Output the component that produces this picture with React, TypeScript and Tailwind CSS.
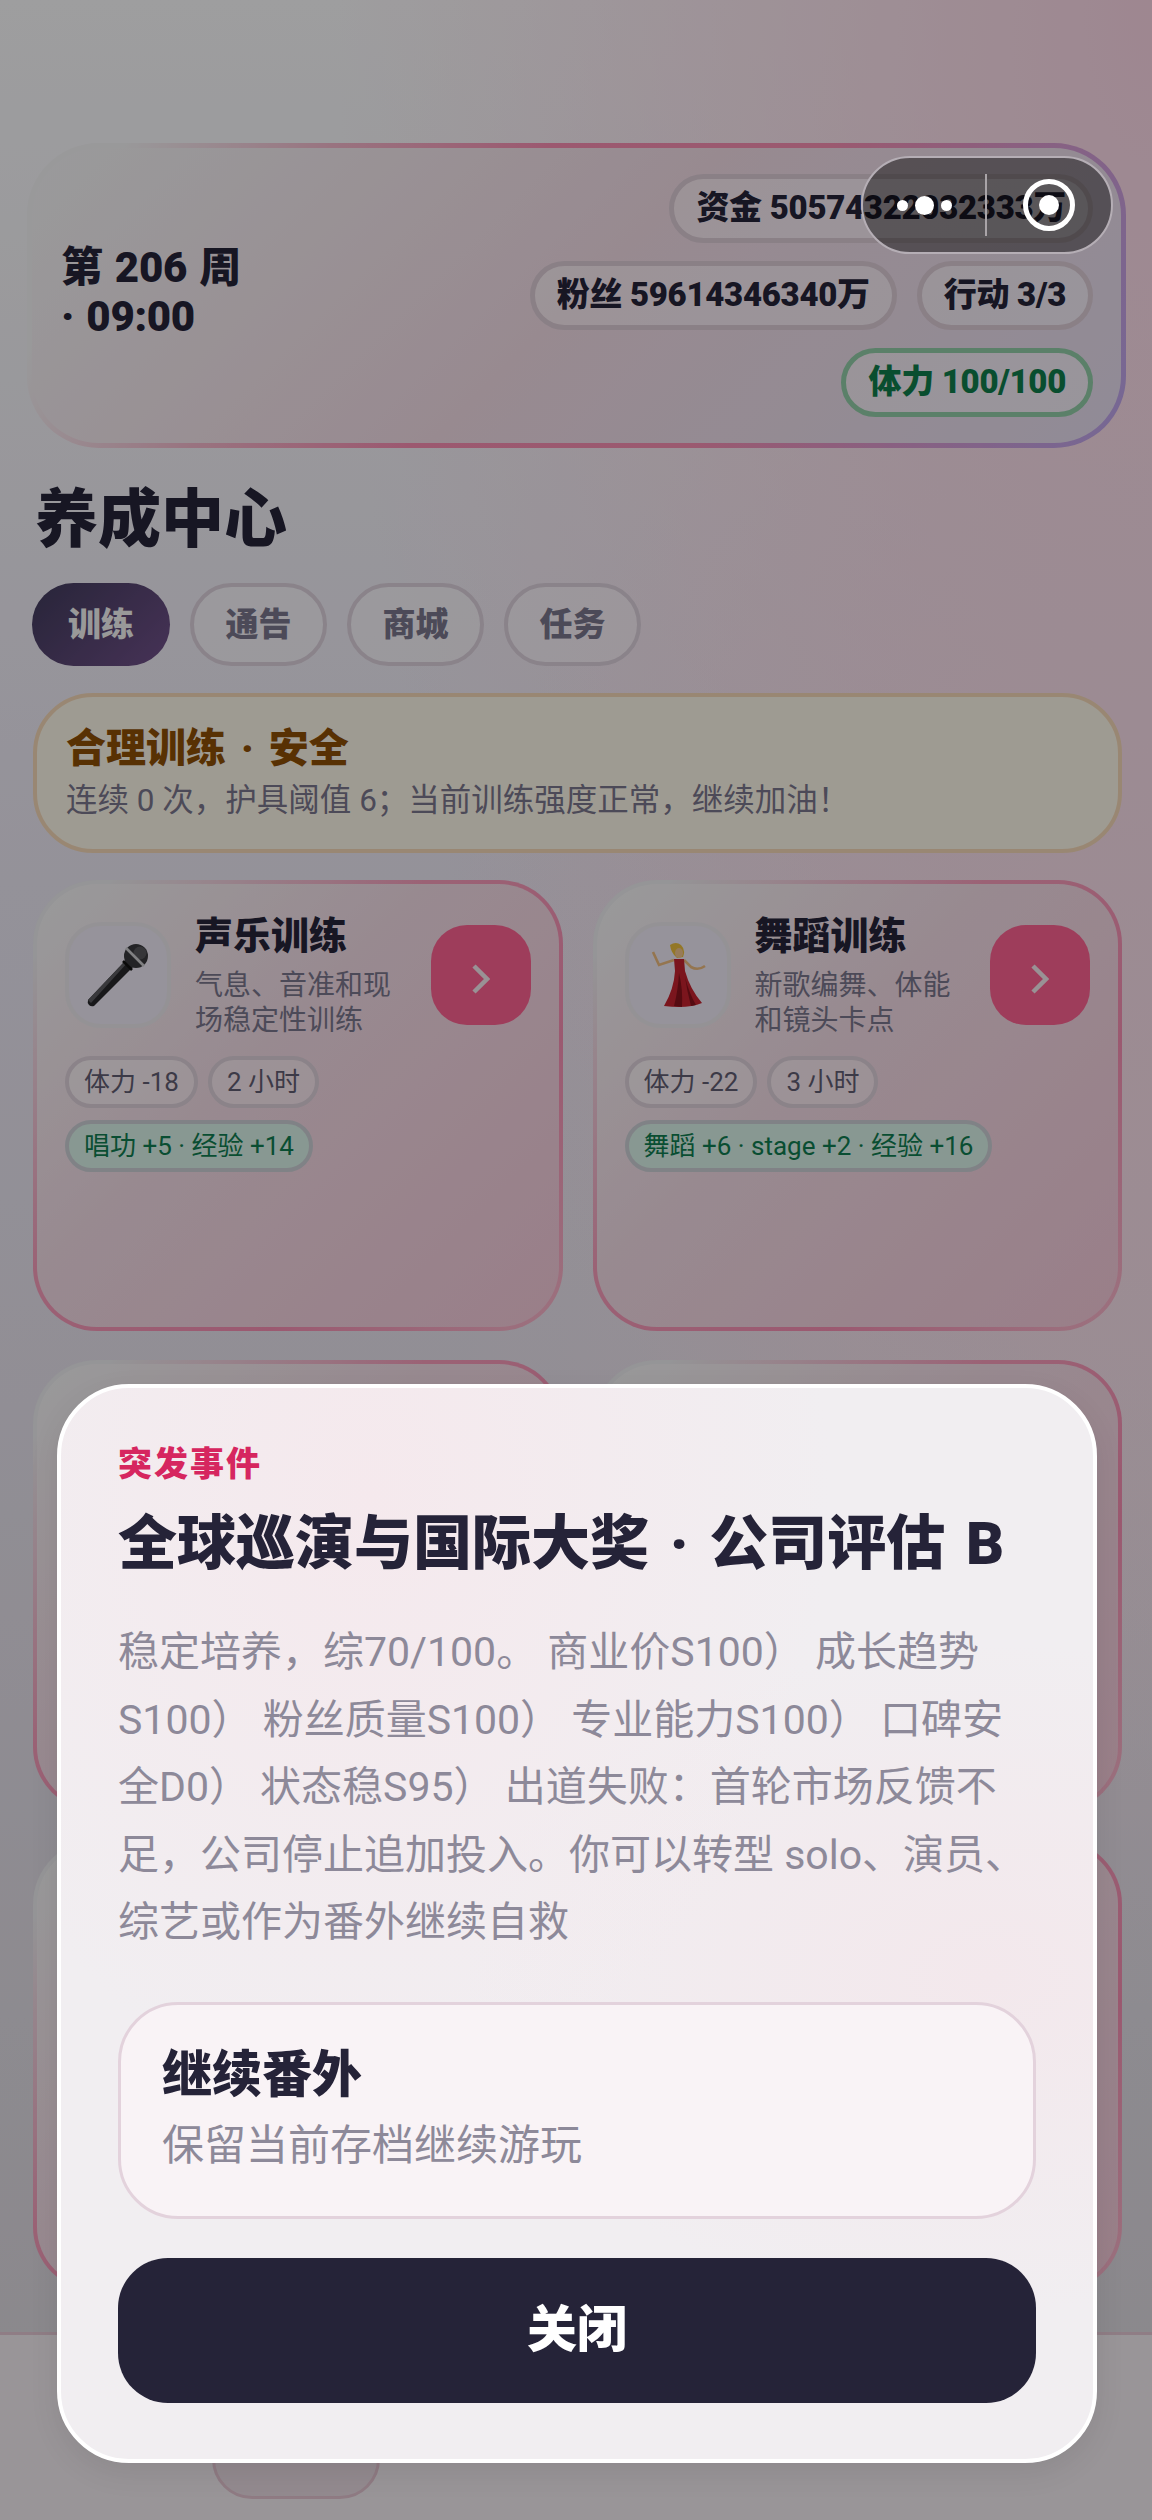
const FONT = "font-['Roboto','Noto_Sans_CJK_SC',sans-serif]";

function Mic() {
  return (
    <svg width="64" height="64" viewBox="0 0 64 64" className="block">
      <path d="M2 57 L40 17 L47 24 L8 63 Q5 64 3 62 Q1 60 2 57Z" fill="#26262a" />
      <path d="M2 57 L40 17 L42 19 L5 60Z" fill="#5a5a5f" />
      <circle cx="50" cy="13" r="12" fill="#38383c" />
      <circle cx="54" cy="10" r="6.5" fill="#55555a" />
      <path d="M40 5 L58 23" stroke="#c9c9cc" strokeWidth="2.6" />
      <path d="M37 18 L46 27" stroke="#111" strokeWidth="2.6" />
    </svg>
  );
}

function Dancer() {
  return (
    <svg width="56" height="64" viewBox="0 0 56 64" className="block">
      <path d="M20 2 Q26 -2 31 2 Q36 7 33 14 L27 15 Q21 10 20 2Z" fill="#e6bb3c" />
      <path d="M24 17 L9 22 L3 9" stroke="#e8b77c" strokeWidth="2.6" fill="none" />
      <path d="M34 17 L41 24 Q48 28 55 23" stroke="#e8b77c" strokeWidth="2.6" fill="none" />
      <ellipse cx="29" cy="10" rx="4" ry="5" fill="#ecc08a" />
      <path d="M24 16 L34 16 L35 28 Q40 46 52 60 Q38 66 14 63 Q24 46 25 28Z" fill="#c0222e" />
      <path d="M29 30 Q28 48 24 63 L32 64 Q33 46 29 30Z" fill="#85121c" />
      <path d="M35 34 Q39 50 46 62 L41 63 Q37 48 35 34Z" fill="#85121c" />
    </svg>
  );
}

function Chip({ children, green }: { children: string; green?: boolean }) {
  return (
    <div
      className={
        green
          ? "h-[52px] flex items-center px-[15px] rounded-full border-[4px] border-[#c8ccd2] bg-[#d5eee4] text-[#0f7a4f] text-[26px] whitespace-nowrap"
          : "h-[52px] flex items-center px-[15px] rounded-full border-[4px] border-[#d9cdd6] bg-white/35 text-[#5f5b70] text-[26px] whitespace-nowrap"
      }
    >
      {children}
    </div>
  );
}

const CARD_BG = "[background:linear-gradient(135deg,#f0f1f2_0%,#eed8e2_40%,#f1c6d6_100%)_padding-box,linear-gradient(135deg,#e9e9ec_8%,#f29ab8_40%,#f28cb0_70%,#f4b4c8_100%)_border-box]";

function TrainCard({ title, d1, d2, emoji, a, b, c }: { title: string; d1: string; d2: string; emoji: React.ReactNode; a: string; b: string; c: string }) {
  return (
    <div className={`h-[451px] rounded-[64px] border-[4px] border-transparent ${CARD_BG} pl-[28px] pr-[28px] pt-[37px]`}>
      <div className="flex items-start">
        <div className="w-[106px] h-[106px] mt-[1px] shrink-0 rounded-[36px] border-[4px] border-[#e8e4ea] bg-[#ebe6f2] flex items-center justify-center">{emoji}</div>
        <div className="ml-[24px] flex-1 -mt-[10px]">
          <div className="text-[38px] leading-[50px] font-black text-[#252338]">{title}</div>
          <div className="text-[28px] leading-[35px] text-[#78748a] mt-[7px]">{d1}<br />{d2}</div>
        </div>
        <div className="w-[100px] h-[100px] mt-[4px] shrink-0 rounded-[36px] bg-[#f8608f] flex items-center justify-center">
          <svg width="18" height="30" viewBox="0 0 18 30" className="mt-[8px]"><path d="M2 2 L15 15 L2 28" fill="none" stroke="#f0e4ea" strokeWidth="4.5" /></svg>
        </div>
      </div>
      <div className="flex gap-[10px] mt-[18px]"><Chip>{a}</Chip><Chip>{b}</Chip></div>
      <div className="flex mt-[12px]"><Chip green>{c}</Chip></div>
    </div>
  );
}

function EmptyCard() {
  return <div className={`h-[451px] rounded-[64px] border-[4px] border-transparent ${CARD_BG}`} />;
}

function Pill({ children, green }: { children: string; green?: boolean }) {
  return (
    <div
      className={
        green
          ? "h-[69px] flex items-center px-[22px] rounded-full border-[5px] border-[#8fc9a4] bg-white/40 text-[#0f7a4a] text-[33px] font-black whitespace-nowrap tracking-[-0.3px]"
          : "h-[69px] flex items-center px-[22px] rounded-full border-[5px] border-[#d8c8d2] bg-white/40 text-[#252338] text-[33px] font-black whitespace-nowrap tracking-[-0.3px]"
      }
    >
      {children}
    </div>
  );
}

export default function App() {
  return (
    <div className={`relative w-[1152px] h-[2520px] overflow-hidden ${FONT} [background:radial-gradient(ellipse_at_100%_0%,#f8d3e2_0%,transparent_50%),radial-gradient(ellipse_at_100%_45%,#f4e0e8_0%,transparent_45%),linear-gradient(180deg,#f7f7f9_0%,#f0eff4_15%,#e8e4f0_35%,#e2dee8_60%,#d8d4da_100%)]`}>
      <div className="pt-[143px] pl-[27px] pr-[26px]">
        <div className="h-[305px] rounded-[72px] border-[5px] border-transparent [background:linear-gradient(135deg,#f1f2f3_0%,#eed8e2_50%,#e2daec_100%)_padding-box,linear-gradient(115deg,#efeff1_8%,#f0b4c8_25%,#f48cb0_42%,#f28db0_65%,#b7a3ea_100%)_border-box] flex items-center pl-[29px] pr-[28px]">
          <div className="w-[210px] shrink-0 text-[42px] leading-[49px] font-black text-[#252338] -mt-[8px] tracking-[-0.3px] [word-spacing:2px]">第 206 周<br />· 09:00</div>
          <div className="flex-1 flex flex-col items-end gap-[18px] -mt-[1px]">
            <Pill>资金 50574322032333万</Pill>
            <div className="flex gap-[20px]"><Pill>粉丝 59614346340万</Pill><Pill>行动 3/3</Pill></div>
            <Pill green>体力 100/100</Pill>
          </div>
        </div>
      </div>

      <div className="pl-[35px] mt-[30px] text-[63px] leading-[84px] font-black text-[#252338]">养成中心</div>

      <div className="flex gap-[20px] pl-[32px] mt-[21px]">
        <div className="w-[138px] h-[83px] rounded-full bg-[linear-gradient(135deg,#3f3a5a,#6f4f88)] flex items-center justify-center text-[33px] font-black text-[#f0f0f0]">训练</div>
        {["通告", "商城", "任务"].map((t) => (
          <div key={t} className="w-[137px] h-[83px] rounded-full border-[4px] border-[#d8cdd8] bg-white/30 flex items-center justify-center text-[33px] font-black text-[#78748a]">{t}</div>
        ))}
      </div>

      <div className="mx-[33px] mt-[27px] w-[1089px] h-[160px] rounded-[60px] border-[4px] border-[#f0d4b4] bg-[#f8f2e4] pl-[29px] pt-[26px]">
        <div className="text-[40px] leading-[52px] font-black text-[#8a4d05] [word-spacing:5px]">合理训练 · 安全</div>
        <div className="text-[31.5px] leading-[40px] mt-[6px] text-[#78748a]">连续 0 次，护具阈值 6；当前训练强度正常，继续加油！</div>
      </div>

      <div className="mx-[33px] mt-[27px] grid grid-cols-2 gap-x-[30px] gap-y-[29px] w-[1089px]">
        <TrainCard title="声乐训练" d1="气息、音准和现" d2="场稳定性训练" emoji={<Mic />} a="体力 -18" b="2 小时" c="唱功 +5 · 经验 +14" />
        <TrainCard title="舞蹈训练" d1="新歌编舞、体能" d2="和镜头卡点" emoji={<Dancer />} a="体力 -22" b="3 小时" c="舞蹈 +6 · stage +2 · 经验 +16" />
        <EmptyCard />
        <EmptyCard />
        <EmptyCard />
        <EmptyCard />
      </div>

      <div className="absolute left-0 right-0 bottom-0 h-[188px] bg-[#efeaee] border-t-[3px] border-[#e0c4d0] pl-[212px] pt-[60px]">
        <div className="w-[168px] h-[104px] rounded-[40px] border-[3px] border-[#e0c0ce] bg-[#e6d8e0]" />
      </div>

      <div className="absolute inset-0 bg-black/[0.36]" />

      <div className="absolute left-[861px] top-[156px] w-[252px] h-[98px] rounded-full border-[2px] border-[#b5aeb5] bg-black/[0.42] flex items-center">
        <div className="w-[124px] h-[62px] flex items-center justify-center gap-[7px] border-r-[2px] border-[#a9a4a8]">
          <span className="w-[11px] h-[11px] rounded-full bg-white" />
          <span className="w-[19px] h-[19px] rounded-full bg-white" />
          <span className="w-[11px] h-[11px] rounded-full bg-white" />
        </div>
        <div className="flex-1 flex items-center justify-center">
          <div className="w-[52px] h-[52px] rounded-full border-[5px] border-white flex items-center justify-center">
            <span className="w-[20px] h-[20px] rounded-full bg-white" />
          </div>
        </div>
      </div>

      <div className="absolute left-[57px] top-[1384px] w-[1040px] h-[1079px] rounded-[72px] border-[4px] border-white [background:radial-gradient(ellipse_at_30%_10%,#f5e9ed_0%,transparent_45%),radial-gradient(ellipse_at_90%_55%,#f3e8ec_0%,transparent_40%),linear-gradient(180deg,#f1eef1,#f1eef1)] px-[57px] pt-[53px] shadow-[0_10px_30px_rgba(0,0,0,0.08)]">
        <div className="text-[34px] leading-[46px] font-black text-[#d6265f] tracking-[2px]">突发事件</div>
        <div className="mt-[17px] text-[59px] leading-[80px] font-black text-[#252338] whitespace-nowrap [word-spacing:6px]">全球巡演与国际大奖 · 公司评估 B</div>
        <div className="mt-[35px] text-[41px] leading-[67.5px] text-[#8d8999]">
          <div className="whitespace-nowrap">稳定培养，综70/100。 商业价S100） 成长趋势</div>
          <div className="whitespace-nowrap">S100） 粉丝质量S100） 专业能力S100） 口碑安</div>
          <div className="whitespace-nowrap">全D0） 状态稳S95） 出道失败：首轮市场反馈不</div>
          <div className="whitespace-nowrap">足，公司停止追加投入。你可以转型 solo、演员、</div>
          <div className="whitespace-nowrap">综艺或作为番外继续自救</div>
        </div>
        <div className="mt-[45px] h-[217px] rounded-[60px] border-[3px] border-[#e3d2dc] bg-[#f9f3f6] pl-[41px] pt-[36px]">
          <div className="text-[50px] leading-[68px] font-black text-[#252338]">继续番外</div>
          <div className="text-[42px] leading-[56px] mt-[9px] text-[#8d8999]">保留当前存档继续游玩</div>
        </div>
        <div className="mt-[39px] h-[145px] rounded-[50px] bg-[#252338] flex items-center justify-center text-[50px] font-black text-white">关闭</div>
      </div>
    </div>
  );
}
